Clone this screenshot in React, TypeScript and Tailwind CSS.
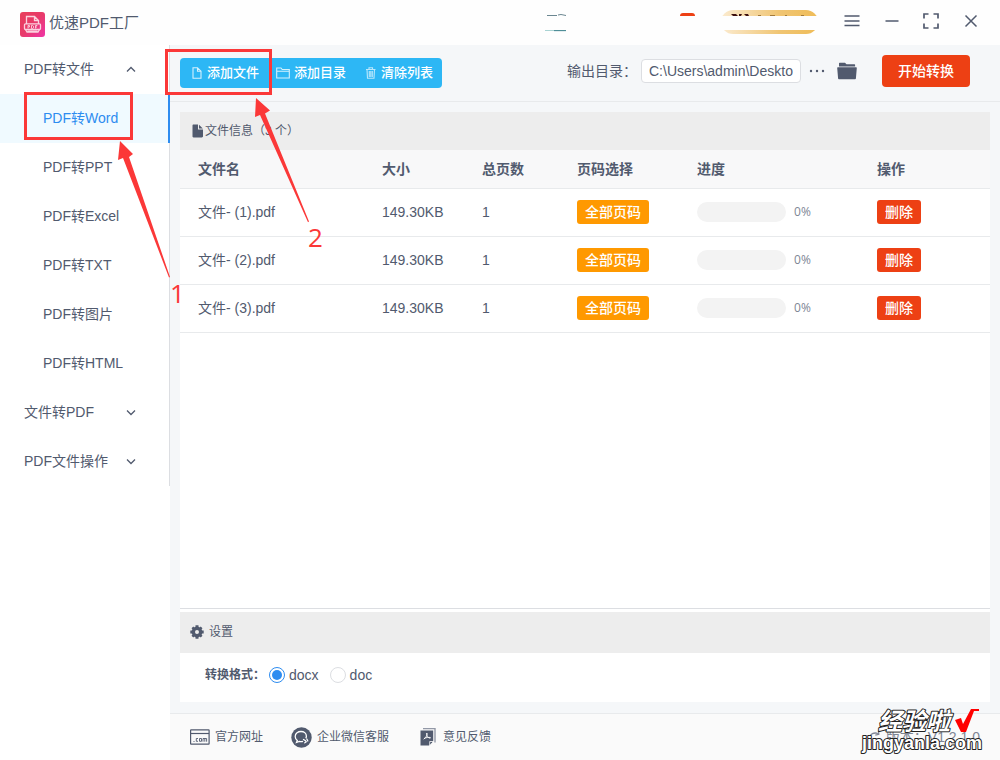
import { useState } from "react";

const MENU = [
  {
    label: "PDF转文件",
    items: ["PDF转Word", "PDF转PPT", "PDF转Excel", "PDF转TXT", "PDF转图片", "PDF转HTML"],
  },
  { label: "文件转PDF", items: [] },
  { label: "PDF文件操作", items: [] },
];

const FILES = [
  { name: "文件- (1).pdf", size: "149.30KB", pages: 1, progress: 0 },
  { name: "文件- (2).pdf", size: "149.30KB", pages: 1, progress: 0 },
  { name: "文件- (3).pdf", size: "149.30KB", pages: 1, progress: 0 },
];

const COLUMNS = [
  { label: "文件名", width: "w-[184px]" },
  { label: "大小", width: "w-[100px]" },
  { label: "总页数", width: "w-[95px]" },
  { label: "页码选择", width: "w-[120px]" },
  { label: "进度", width: "w-[180px]" },
  { label: "操作", width: "" },
];

export default function App() {
  const [active, setActive] = useState("PDF转Word");

  return (
    <div className="relative flex min-h-screen flex-col overflow-hidden bg-white font-['Liberation_Sans','Noto_Sans_CJK_SC',sans-serif] text-sm text-[#515a6e]">
      <TitleBar />
      <div className="flex flex-1">
        <Sidebar active={active} onSelect={setActive} />
        <main className="flex min-w-0 flex-1 flex-col bg-[#f5f7f9]">
          <Toolbar />
          <FilePanel />
          <Settings />
          <Footer />
        </main>
      </div>
      <Annotations />
      <Watermark />
    </div>
  );
}

function TitleBar() {
  return (
    <header className="flex h-[45px] items-center bg-[#fefefe] pl-5 pr-[22px]">
      <div className="flex items-center pt-[3px]">
        <Logo />
        <h1 className="ml-1 pb-[3px] text-[15px] leading-5">优速PDF工厂</h1>
      </div>
      <div className="ml-auto flex items-center pb-[3px]">
        <HeaderBadges />
        <button aria-label="菜单" className="ml-[25px]">
          <svg width="16" height="16" viewBox="0 0 16 16" stroke="#515a6e" strokeWidth="1.5" className="block">
            <path d="M0.500 3h15M0.500 8h15M0.500 12.500h15" />
          </svg>
        </button>
        <button aria-label="最小化" className="ml-[25px]">
          <svg width="14" height="16" viewBox="0 0 14 16" stroke="#515a6e" strokeWidth="1.5" className="block">
            <path d="M0.500 8h13" />
          </svg>
        </button>
        <button aria-label="最大化" className="ml-6">
          <svg width="16" height="16" viewBox="0 0 16 16" fill="none" stroke="#515a6e" strokeWidth="1.7" className="block">
            <path d="M1 5.500V1h4.500M10.500 1H15v4.500M15 10.500V15h-4.500M5.500 15H1v-4.500" />
          </svg>
        </button>
        <button aria-label="关闭" className="ml-[25px]">
          <svg width="14" height="14" viewBox="0 0 14 14" stroke="#515a6e" strokeWidth="1.5" className="block">
            <path d="M1.500 1.500l11 11M12.500 1.500l-11 11" />
          </svg>
        </button>
      </div>
    </header>
  );
}

function Logo() {
  return (
    <svg width="25" height="25" viewBox="0 0 25 25" fill="none" className="block">
      <defs>
        <linearGradient id="logo" x1="0" y1="0" x2="1" y2="1">
          <stop offset="0" stopColor="#e8405a" />
          <stop offset="0.5" stopColor="#e83a6a" />
          <stop offset="1" stopColor="#ef35a8" />
        </linearGradient>
      </defs>
      <rect width="25" height="25" rx="3" fill="url(#logo)" />
      <path d="M6.500 12V4.500h8l4 4V12M14.500 4.500v4h4" stroke="#fbd3df" strokeWidth="1.300" />
      <path d="M5.500 17.500l1.500 2.500h11l1.500-2.500M7.500 19.200h10" stroke="#fbd3df" strokeWidth="1.300" />
      <rect x="4.500" y="11.800" width="16" height="5.700" rx="1" stroke="#fbd3df" strokeWidth="1.300" />
      <path
        d="M8 16.500v-3h1.500v1.500H8M11.500 13.500v3h1l1-0.700v-1.600l-1-0.700zM15.500 16.500v-3h1.800M15.500 15h1.500"
        stroke="#fbd3df"
        strokeWidth="0.900"
      />
    </svg>
  );
}

/* avatar, notice dot and member pill, all partly covered by a white band */
function HeaderBadges() {
  return (
    <svg width="275" height="30" viewBox="0 -3 275 30" className="block">
      <defs>
        <linearGradient id="gold" x1="0" x2="1">
          <stop offset="0" stopColor="#fbebd0" />
          <stop offset="0.600" stopColor="#f0c573" />
          <stop offset="1" stopColor="#efbc58" />
        </linearGradient>
      </defs>
      <path d="M3 6.500h10M14 6l3-0.500 5 1" stroke="#6b8791" strokeWidth="1" fill="none" />
      <path d="M1 21.500h10" stroke="#a9d3d3" strokeWidth="1" />
      <path d="M10 21.500h12" stroke="#4f8e98" strokeWidth="1.300" />
      <path d="M136 7c0-2 1-3 3-3h9c2 0 3 1 3 3z" fill="#ed4014" />
      <rect x="177" y="1" width="97" height="24" rx="12" fill="url(#gold)" />
      <path d="M187 5h5l2 2h-5zM195 5h3l-1 2h-2zM200 5h4l1 2h-3z" fill="#3d1010" />
      <path d="M214 6.500h3M226 6.500h5M241 6.500h2M257 6.500h3" stroke="#a37b3c" strokeWidth="1" />
      <path d="M0 7h275v14H0z" fill="#fefefe" />
    </svg>
  );
}

function Sidebar({ active, onSelect }: { active: string; onSelect: (name: string) => void }) {
  return (
    <aside className="w-[170px] flex-none bg-white">
      <nav className="border-r border-[#dcdee2]">
        {MENU.map((group) => {
          const open = group.items.length > 0;
          return (
            <div key={group.label}>
              <button className="flex h-[49px] w-full items-center justify-between pb-[2px] pl-6 pr-8">
                {group.label}
                <svg width="12" height="12" viewBox="0 0 12 12" fill="none" stroke="#515a6e" strokeWidth="1.3">
                  <path d={open ? "M2 8.500l4-4 4 4" : "M2 4.500l4 4 4-4"} />
                </svg>
              </button>
              {group.items.map((item) => (
                <a
                  key={item}
                  href="#"
                  onClick={() => onSelect(item)}
                  className={
                    item === active
                      ? "-mr-px flex h-[49px] items-center border-r-2 border-[#2d8cf0] bg-[#f0faff] pb-[2px] pl-[43px] text-[#2d8cf0]"
                      : "flex h-[49px] items-center pb-[2px] pl-[43px]"
                  }
                >
                  {item}
                </a>
              ))}
            </div>
          );
        })}
      </nav>
    </aside>
  );
}

function Toolbar() {
  return (
    <div className="flex h-[57px] items-center border-b border-[#e8eaec] pl-[10px] pr-[30px]">
      <div className="flex h-[30px] overflow-hidden rounded bg-[#2db7f5] text-[13px] font-medium text-white">
        <button className="flex w-[87px] items-center justify-end gap-1 pr-2">
          <svg width="12" height="12" viewBox="0 0 12 12" fill="none" stroke="#d5f1fd" strokeWidth="1.100">
            <path d="M2 0.800h4.500L10 4.200v7H2zM6.500 0.800v3.400H10" />
          </svg>
          添加文件
        </button>
        <button className="flex w-[87px] items-center justify-end gap-1 pr-2">
          <svg width="14" height="12" viewBox="0 0 14 12" fill="none" stroke="#d5f1fd" strokeWidth="1.100">
            <path d="M0.700 11V1h4.300l1.200 1.500h7.100V11zM0.700 4.200h12.600" />
          </svg>
          添加目录
        </button>
        <button className="flex w-[88px] items-center justify-end gap-1 pr-[9px]">
          <svg width="12" height="12" viewBox="0 0 12 12" fill="none" stroke="#b9e7fc" strokeWidth="1.100">
            <path d="M1 2.500h9.500M4 2.300V0.800h3.500v1.500M2 2.500l0.500 8.800h6.500l0.500-8.800M4.300 4v6M5.800 4v6M7.300 4v6" />
          </svg>
          清除列表
        </button>
      </div>

      <div className="ml-auto flex items-center pb-1">
        <label htmlFor="outdir">输出目录：</label>
        <input
          id="outdir"
          readOnly
          defaultValue="C:\Users\admin\Deskto"
          className="ml-1 h-6 w-40 rounded-sm border border-[#dcdee2] bg-white px-[7px] text-sm outline-none"
        />
        <button aria-label="选择目录" className="ml-2">
          <svg width="16" height="16" viewBox="0 0 16 16" fill="#515a6e" className="block">
            <circle cx="2" cy="8" r="1.200" />
            <circle cx="8" cy="8" r="1.200" />
            <circle cx="14" cy="8" r="1.200" />
          </svg>
        </button>
        <button aria-label="打开目录" className="ml-3">
          <svg width="20" height="18" viewBox="0 0 20 18" fill="#515a6e" className="block">
            <path d="M2 4.500V1.300C2 1 2.300 0.700 2.600 0.700H8l1.500 1.500h8c0.300 0 0.600 0.300 0.600 0.600v1.700z" />
            <path d="M0.800 5.300h18.400c0.400 0 0.600 0.300 0.600 0.600l-0.900 10.600c0 0.500-0.400 0.800-0.800 0.800H1.900c-0.400 0-0.800-0.300-0.800-0.800L0.200 5.900c0-0.300 0.200-0.600 0.600-0.600z" />
          </svg>
        </button>
        <button className="ml-[25px] h-8 w-[88px] rounded bg-[#ed4014] font-medium text-white">开始转换</button>
      </div>
    </div>
  );
}

function FilePanel() {
  return (
    <section className="mx-[10px] mt-[10px] flex flex-1 flex-col border-b border-[#dcdee2] bg-white">
      <h2 className="flex h-[38px] items-center bg-[#ededed] pl-3 text-xs">
        <svg width="12" height="14" viewBox="0 0 12 14" fill="#515a6e" className="mr-px">
          <path d="M1.500 0.500H6v5h5v6.800c0 0.700-0.500 1.200-1.200 1.200H1.500c-0.700 0-1-0.500-1-1.200V1.700c0-0.700 0.300-1.200 1-1.200zM7 0.800L10.800 4.500H7z" />
        </svg>
        文件信息（{FILES.length} 个）
      </h2>
      <table className="w-full table-fixed text-left">
        <thead>
          <tr className="h-[38px] border-b border-[#e8eaec] bg-[#f8f8f9]">
            {COLUMNS.map((c) => (
              <th key={c.label} className={`${c.width} px-[18px] font-bold`}>
                {c.label}
              </th>
            ))}
          </tr>
        </thead>
        <tbody>
          {FILES.map((f) => (
            <tr key={f.name} className="h-12 border-b border-[#e8eaec]">
              <td className="pl-[18px]">{f.name}</td>
              <td className="pl-[18px]">{f.size}</td>
              <td className="pl-[18px]">{f.pages}</td>
              <td className="pl-[18px]">
                <button className="block h-6 w-[72px] rounded-[3px] bg-[#ff9900] font-medium text-white">全部页码</button>
              </td>
              <td className="pl-[18px]">
                <div className="flex items-center">
                  <div className="h-5 w-[89px] overflow-hidden rounded-full bg-[#f3f3f3]">
                    <div className="h-full bg-[#2db7f5]" style={{ width: `${f.progress}%` }} />
                  </div>
                  <span className="ml-2 font-['Open_Sans',sans-serif] text-xs text-[#808695]">{f.progress}%</span>
                </div>
              </td>
              <td className="pl-[18px]">
                <button className="block h-6 w-11 rounded-[3px] bg-[#ed4014] font-medium text-white">删除</button>
              </td>
            </tr>
          ))}
        </tbody>
      </table>
    </section>
  );
}

function Settings() {
  const [format, setFormat] = useState("docx");

  return (
    <section className="mx-[10px] mb-[11px] border-t-[3px] border-white bg-white">
      <h2 className="flex h-[41px] items-center bg-[#ededed] pb-[2px] pl-[10px] text-xs">
        <svg width="14" height="14" viewBox="0 0 14 14" className="mr-[5px]">
          <circle cx="7" cy="7" r="3.700" fill="none" stroke="#515a6e" strokeWidth="3.400" />
          <g stroke="#515a6e" strokeWidth="3">
            <path d="M7 0.300v2.500M7 11.200v2.500M0.300 7h2.500M11.200 7h2.500" />
            <path d="M2.400 2.400l1.700 1.700M9.900 9.900l1.700 1.700M2.400 11.600l1.700-1.700M9.900 4.100l1.700-1.700" strokeWidth="2.600" />
          </g>
        </svg>
        设置
      </h2>
      <div role="radiogroup" aria-labelledby="format-label" className="flex h-[49px] items-center pb-[6px] pl-[25px]">
        <span id="format-label" className="mr-1 text-xs font-bold">
          转换格式：
        </span>
        {["docx", "doc"].map((f) => (
          <label key={f} className="mr-[11px] flex items-center">
            <input
              type="radio"
              name="format"
              checked={format === f}
              onChange={() => setFormat(f)}
              className="mr-1 h-4 w-4 appearance-none rounded-full border border-[#dcdee2] bg-white bg-clip-content p-[2px] checked:border-[#2d8cf0] checked:bg-[#2d8cf0]"
            />
            {f}
          </label>
        ))}
      </div>
    </section>
  );
}

function Footer() {
  return (
    <footer className="flex h-[47px] items-center border-t border-[#e8eaec] bg-[#fafafa] pl-5 pr-5 text-xs">
      <a href="#" className="flex items-center">
        <svg width="20" height="16" viewBox="0 0 20 16" fill="none" stroke="#515a6e" className="mr-[5px]">
          <rect x="0.600" y="0.800" width="18.500" height="14.400" rx="0.500" strokeWidth="1.200" />
          <path d="M0.600 4.500h18.500" strokeWidth="1.200" />
          <path
            d="M3.500 12.500h1M8 9.500H6.300v2.800H8M9.500 9.500h2v2.800h-2zM13 12.700V9.500h3.600v3.200M14.800 9.500v3.200"
            strokeWidth="0.900"
          />
        </svg>
        官方网址
      </a>
      <a href="#" className="ml-7 flex items-center">
        <svg width="21" height="21" viewBox="0 0 21 21" fill="none" className="mr-[5px]">
          <circle cx="10.500" cy="10.500" r="10.200" fill="#515a6e" />
          <path
            d="M14.800 11.300c0.400-0.700 0.600-1.300 0.600-2 0-3-2.500-4.800-5.400-4.800s-5.800 1.900-5.800 5c0 1.700 0.800 3 2.100 4l-0.800 2 2.800-1c1.300 0.300 2.500 0.300 3.700-0.200"
            stroke="#fff"
            strokeWidth="1.300"
          />
          <path d="M12.500 12.500l2 1.300M15.800 12l1 2M13.800 15.800l1.500-1" stroke="#fff" strokeWidth="1.300" strokeLinecap="round" />
        </svg>
        企业微信客服
      </a>
      <a href="#" className="ml-[31px] flex items-center">
        <svg width="16" height="18" viewBox="0 0 16 18" className="mr-[7px]">
          <path d="M3 0.500h12v14" fill="none" stroke="#9298a6" strokeWidth="1.400" />
          <path d="M0.500 2.500h12.700v10.300l-4.200 4.700H0.500z" fill="#515a6e" />
          <path d="M9.700 17.500v-4h3.800z" fill="#515a6e" stroke="#fafafa" strokeWidth="0.800" />
          <path
            d="M6.700 5c-0.700 0.800 0.200 2.500 0.800 3.500 0.800 1.200 2 2 3 1.500M7 5c0.800 1.500-0.800 4.500-3.300 6.200M4 10.500c2-1 4.500-1.300 6.500-1"
            fill="none"
            stroke="#fff"
            strokeWidth="0.900"
          />
        </svg>
        意见反馈
      </a>
      <span className="ml-auto flex items-center text-sm text-[#808695]">
        <svg width="14" height="14" viewBox="0 0 14 14" fill="none" stroke="#808695" strokeWidth="1.300" className="mr-1">
          <path d="M1 8c1-4 5-6 9-4.500M10.500 0.800l0.300 3.500-3.500 0.800" />
        </svg>
        版本：V1.2.1.0
      </span>
    </footer>
  );
}

/* numbered red step markers lying over the window */
function Annotations() {
  return (
    <div className="pointer-events-none absolute inset-0 font-['Open_Sans',sans-serif] text-[26px] leading-6 text-[#fb3838]">
      <div className="absolute left-6 top-[92px] h-12 w-[109px] border-3 border-[#fb3838]" />
      <div className="absolute left-[165px] top-[49px] h-[46px] w-[107px] border-3 border-[#fb3838]" />
      <svg width="320" height="290" viewBox="0 0 320 290" fill="#fb3838" className="absolute left-0 top-0">
        <path d="M120 141l13 13-4 3 41 120-1 0.500L123 158l-5 2z" />
        <path d="M256 98l14 12.500-5 3 44 108-1 0.700L260 115l-5 2z" />
      </svg>
      <span className="absolute left-[170px] top-[281px]">1</span>
      <span className="absolute left-[308px] top-[225px]">2</span>
    </div>
  );
}

function Watermark() {
  return (
    <svg
      width="130"
      height="52"
      viewBox="0 0 130 52"
      className="pointer-events-none absolute bottom-0 right-[12px] font-['Liberation_Sans','Noto_Sans_CJK_SC',sans-serif] font-bold"
    >
      <g fill="#fff" stroke="#222" strokeWidth="2" strokeLinejoin="round" paintOrder="stroke">
        <text x="20" y="22" fontSize="24" fontStyle="italic">
          经验啦
        </text>
        <text x="4" y="41" fontSize="18">
          jingyanla.com
        </text>
      </g>
      <path d="M97 12l6-2 2 6 8-15h8v2h-5l-8 21h-5z" fill="#f00" />
    </svg>
  );
}
